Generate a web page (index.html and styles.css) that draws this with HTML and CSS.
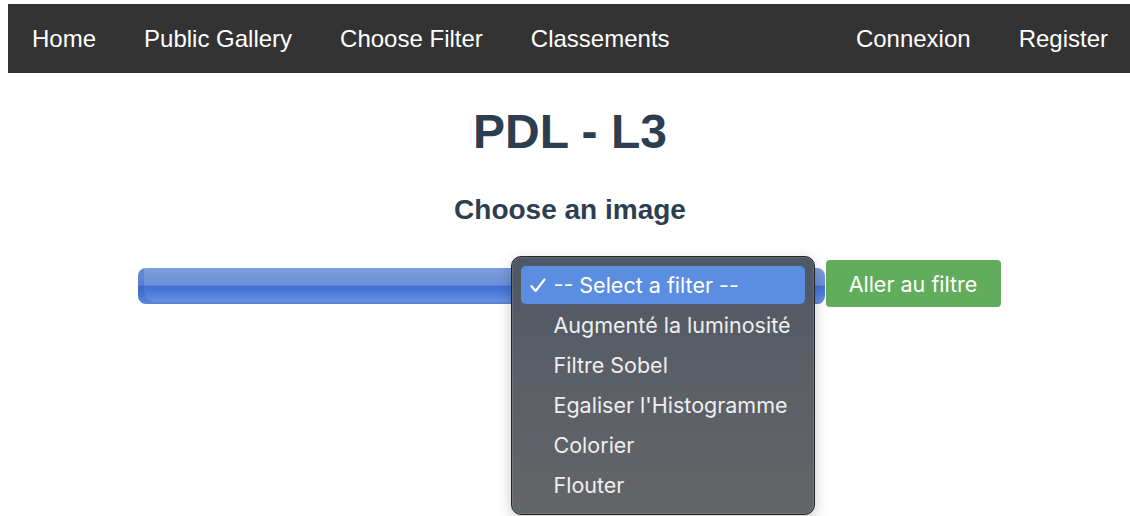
FILE: index.html
```html
<!DOCTYPE html>
<html lang="fr">
<head>
<meta charset="utf-8">
<title>PDL - L3</title>
<link rel="stylesheet" href="styles.css">
</head>
<body>
<nav class="nav">
  <div class="nav-group">
    <a class="nav-link" href="#">Home</a>
    <a class="nav-link" href="#">Public Gallery</a>
    <a class="nav-link" href="#">Choose Filter</a>
    <a class="nav-link" href="#">Classements</a>
  </div>
  <div class="nav-group nav-right">
    <a class="nav-link" href="#">Connexion</a>
    <a class="nav-link" href="#">Register</a>
  </div>
</nav>
<main class="main">
  <h1 class="title">PDL - L3</h1>
  <h2 class="subtitle">Choose an image</h2>
  <div class="controls">
    <div class="select-wrap">
      <div class="select"></div>
      <div class="popup">
        <div class="option selected"><svg class="check" width="16" height="15" viewBox="0 0 16 15"><path d="M1.5 8.2 L5.6 13 L14.5 1.5" fill="none" stroke="#ffffff" stroke-width="2.2" stroke-linecap="round" stroke-linejoin="round"/></svg>-- Select a filter --</div>
        <div class="option">Augmenté la luminosité</div>
        <div class="option">Filtre Sobel</div>
        <div class="option">Egaliser l'Histogramme</div>
        <div class="option">Colorier</div>
        <div class="option">Flouter</div>
      </div>
    </div>
    <button class="go">Aller au filtre</button>
  </div>
</main>
</body>
</html>
```

FILE: styles.css
```css
html, body {
  margin: 0;
  padding: 0;
  background: #ffffff;
}

body {
  min-height: 100vh;
  font-family: "Liberation Sans", Arial, sans-serif;
  color: #2c3e50;
}

.nav {
  display: flex;
  justify-content: space-between;
  align-items: center;
  margin: 4px 0 0 8px;
  height: 69px;
  background: #333333;
}

.nav-group {
  display: flex;
}

.nav-right {
  margin-right: -2px;
}

.nav-link {
  color: #ffffff;
  text-decoration: none;
  font-size: 24px;
  padding: 0 24px;
  line-height: 28px;
}

.main {
  text-align: center;
  padding-top: 31px;
  padding-left: 10px;
  padding-bottom: 200px;
}

.title {
  margin: 0;
  font-size: 48px;
  line-height: 56px;
  font-weight: bold;
}

.subtitle {
  margin: 34px 0 0;
  font-size: 28px;
  line-height: 32px;
  font-weight: bold;
}

.controls {
  display: flex;
  justify-content: center;
  align-items: flex-start;
  margin-top: 34px;
  margin-left: -2px;
}

.select-wrap {
  position: relative;
  width: 687px;
  margin-top: 8px;
  margin-right: 1px;
}

.select {
  height: 36px;
  border-radius: 8px;
  background:
    linear-gradient(to bottom, #7d9ddc 0%, #6a8fd8 48%, #3f6fd2 50%, #5480dc 75%, #6f96e2 100%);
  box-shadow: inset 10px -6px 0 -4px rgba(40, 80, 180, 0.25);
}

.popup {
  position: absolute;
  left: 373px;
  top: -12px;
  width: 284px;
  padding: 8px 9px 9px;
  border-radius: 10px;
  border: 1px solid #222428;
  background: linear-gradient(to bottom, #4e5764 0%, #5b5f67 45%, #646568 100%);
  box-shadow: inset 0 0 0 1px rgba(255, 255, 255, 0.12), 0 4px 14px rgba(0, 0, 0, 0.22);
  font-family: Inter, "Noto Sans", sans-serif;
  text-align: left;
}

.option {
  height: 40px;
  line-height: 40px;
  padding-left: 33px;
  font-size: 21.5px;
  color: #eeeeee;
  border-radius: 5px;
  position: relative;
  white-space: nowrap;
}

.option.selected {
  background: #5b8de0;
  height: 38px;
  line-height: 38px;
  margin-top: 1px;
  margin-bottom: 1px;
  color: #ffffff;
}

.check {
  position: absolute;
  left: 9px;
  top: 12px;
}

.go {
  width: 175px;
  height: 47px;
  border: none;
  border-radius: 4px;
  background: #61ad5b;
  color: #ffffff;
  font-family: Inter, "Noto Sans", sans-serif;
  font-size: 21.5px;
  padding: 0;
}
```
